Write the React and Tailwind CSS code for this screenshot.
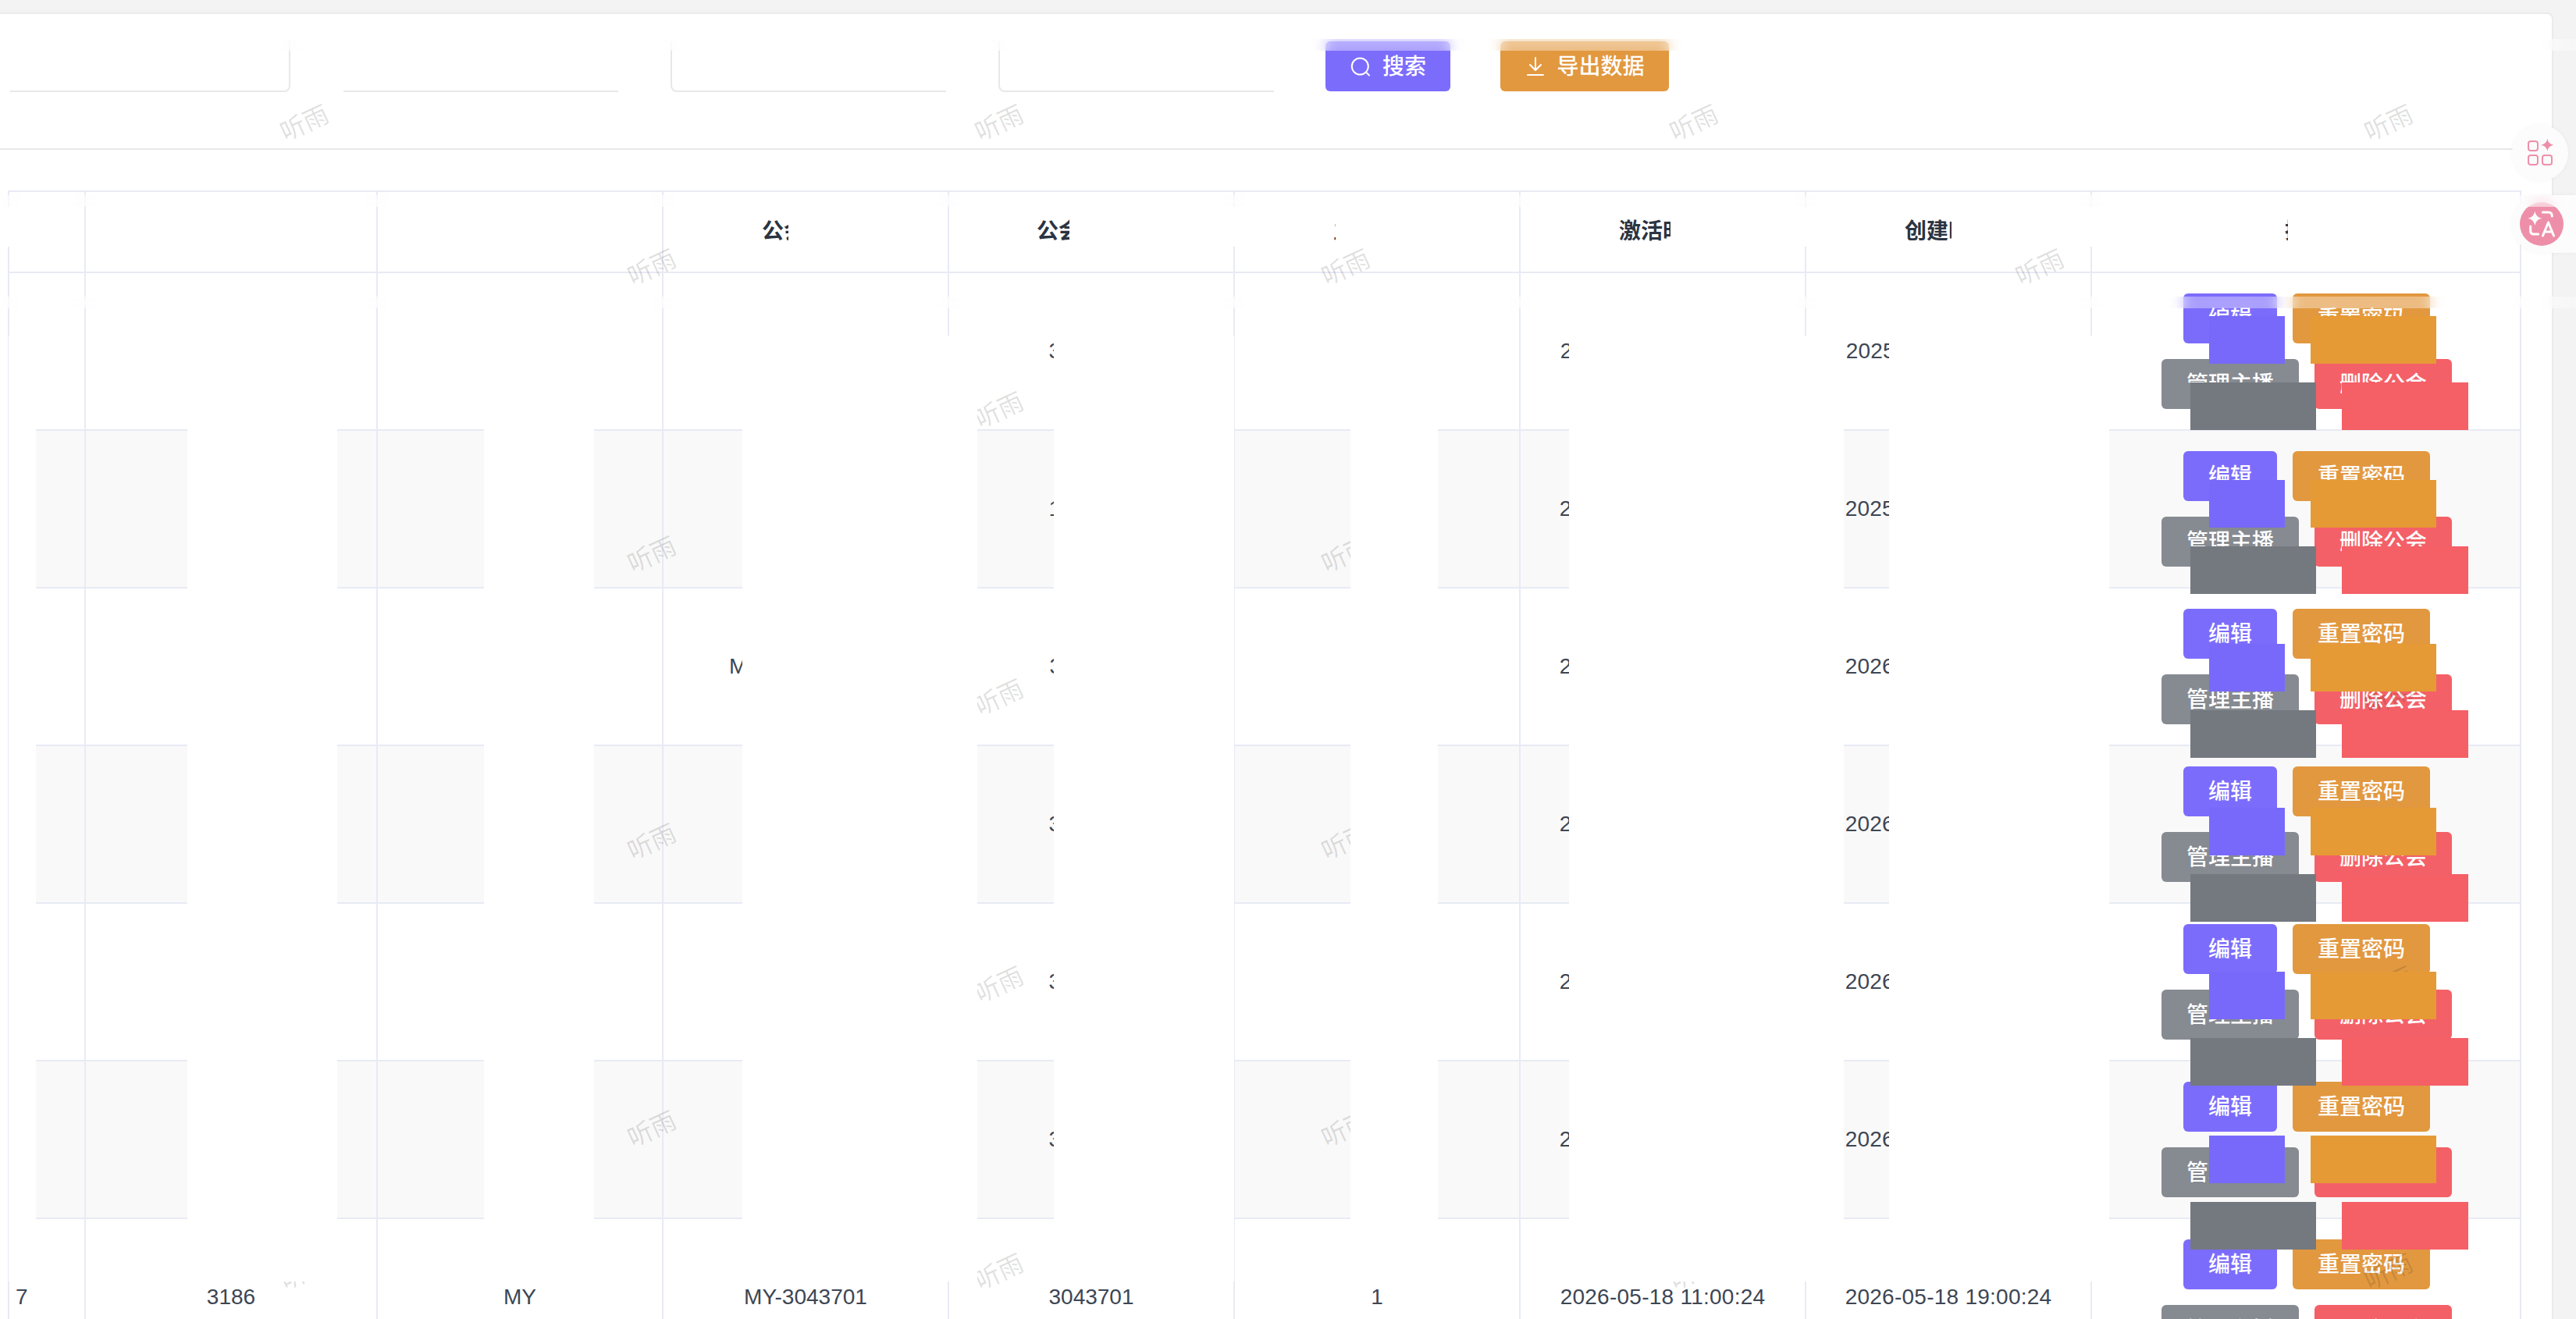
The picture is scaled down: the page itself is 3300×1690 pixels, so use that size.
import React from 'react';

const tableCols = 'grid grid-cols-[98px_374px_366px_366px_366px_366px_366px_366px_552px]';

const headers = ['序号', '公会ID', '地区', '公会账号', '公会邀请码', '主播数量', '激活时间', '创建时间'];

const rows = [
  ['1', '3201', 'MY', 'MY-3012201', '3012201', '2', '2025-11-20 10:12:08', '2025-11-20 18:12:08'],
  ['2', '3198', 'MY', 'MY-1028835', '1028835', '3', '2025-12-02 09:40:51', '2025-12-02 17:40:51'],
  ['3', '3195', 'MY', 'MY-3040112-08', '3040112', '1', '2026-01-14 13:22:37', '2026-01-14 21:22:37'],
  ['4', '3192', 'MY', 'MY-3041290', '3041290', '1', '2026-02-27 15:05:12', '2026-02-27 23:05:12'],
  ['5', '3190', 'MY', 'MY-3042076', '3042076', '2', '2026-03-19 08:31:44', '2026-03-19 16:31:44'],
  ['6', '3188', 'MY', 'MY-3042918', '3042918', '1', '2026-04-25 12:16:03', '2026-04-25 20:16:03'],
  ['7', '3186', 'MY', 'MY-3043701', '3043701', '1', '2026-05-18 11:00:24', '2026-05-18 19:00:24'],
];

// watermark grid repeats every 889 x 368, odd rows are shifted half a step
const marks = [];
for (let i = 0; i < 5; i++) {
  for (let j = 0; j < 4; j++) marks.push({ x: 390 + j * 890, y: 158 + i * 368 });
}
for (let i = 0; i < 4; i++) {
  for (let j = 0; j < 3; j++) marks.push({ x: 835 + j * 889, y: 343 + i * 368 });
}

function SearchIcon() {
  return (
    <svg width="28" height="28" viewBox="0 0 28 28" fill="none" stroke="white" strokeWidth="2" strokeLinecap="round">
      <circle cx="13.3" cy="14" r="10.5" />
      <path d="M21.5 22 L25 25.5" />
    </svg>
  );
}

function DownloadIcon() {
  return (
    <svg width="28" height="28" viewBox="0 0 28 28" fill="none" stroke="white" strokeWidth="2" strokeLinecap="round" strokeLinejoin="round">
      <path d="M14 3 V19 M7 12 L14 19 L21 12" />
      <path d="M4 25 H24" />
    </svg>
  );
}

function GridSparkIcon() {
  return (
    <svg width="36" height="36" viewBox="0 0 36 36" fill="none" stroke="#ee8fa9" strokeWidth="2" className="overflow-visible">
      <rect x="3" y="3" width="12" height="12" rx="3" />
      <rect x="3" y="21" width="12" height="12" rx="3" />
      <rect x="21" y="21" width="12" height="12" rx="3" />
      <path d="M27.3 -0.3 Q28.5 6.5 35.3 7.7 Q28.5 8.9 27.3 15.7 Q26.1 8.9 19.3 7.7 Q26.1 6.5 27.3 -0.3 Z" fill="#ee8fa9" stroke="none" />
    </svg>
  );
}

function TranslateIcon() {
  return (
    <svg width="56" height="56" viewBox="0 0 56 56" fill="none" stroke="white" strokeWidth="3" strokeLinecap="round" strokeLinejoin="round">
      <path d="M19.3 11.7 Q20.6 19.4 28.3 20.7 Q20.6 22 19.3 29.7 Q18 22 10.3 20.7 Q18 19.4 19.3 11.7 Z" fill="white" stroke="none" />
      <path d="M29.3 13 H37 Q41.3 13 41.3 18" />
      <path d="M13.7 31 V37 Q13.7 41 18 41 H23.7" />
      <path d="M29.5 43 L36.5 26 L43.5 43 M31.5 38 H41.5" />
    </svg>
  );
}

function ActionButton({ className, children }) {
  return (
    <button className={`h-[64px] pt-[2px] rounded-[6px] text-white text-[28px] font-medium flex items-center justify-center ${className}`}>
      {children}
    </button>
  );
}

function Actions() {
  return (
    <div className="flex flex-col items-center gap-[20px]">
      <div className="flex gap-[20px]">
        <ActionButton className="w-[120px] bg-[#7c6cfc]">编辑</ActionButton>
        <ActionButton className="w-[176px] bg-[#e2983f]">重置密码</ActionButton>
      </div>
      <div className="flex gap-[20px]">
        <ActionButton className="w-[176px] bg-[#868a91]">管理主播</ActionButton>
        <ActionButton className="w-[176px] bg-[#f46067]">删除公会</ActionButton>
      </div>
    </div>
  );
}

function FilterBar() {
  return (
    <div className="flex mt-[35px] pl-[13px]">
      <div className="w-[359px] h-[65px] border-r-2 border-b-2 border-[#e8e8ea] rounded-br-[8px]" />
      <div className="w-[352px] h-[65px] ml-[68px] border-b-2 border-[#e8e8ea]" />
      <div className="w-[353px] h-[65px] ml-[67px] border-l-2 border-b-2 border-[#e8e8ea] rounded-bl-[8px]" />
      <div className="w-[353px] h-[65px] ml-[67px] border-l-2 border-b-2 border-[#e8e8ea] rounded-bl-[8px]" />
      <button className="w-[160px] h-[64px] ml-[66px] rounded-[6px] bg-[#7c6cfc] text-white text-[28px] font-medium flex items-center justify-center gap-[14px]">
        <SearchIcon />
        <span className="pt-[2px]">搜索</span>
      </button>
      <button className="w-[216px] h-[64px] ml-[64px] rounded-[6px] bg-[#e2983f] text-white text-[28px] font-medium flex items-center justify-center gap-[13px]">
        <DownloadIcon />
        <span className="pt-[2px]">导出数据</span>
      </button>
    </div>
  );
}

function Table() {
  return (
    <div className="ml-[10px] mt-[52px] w-[3220px] border-t-2 border-r-2 border-[#e8eaf5]">
      <div className={`${tableCols} h-[104px] border-b-2 border-[#e8eaf5] text-[28px] font-semibold text-[#2b3442]`}>
        {headers.map(h => (
          <div key={h} className="border-l-2 border-[#e8eaf5] flex items-center justify-center">{h}</div>
        ))}
        <div className="border-l-2 border-[#e8eaf5] flex items-center justify-center">操作</div>
      </div>
      {rows.map((row, i) => (
        <div key={row[0]} className={`${tableCols} h-[202px] border-b-2 border-[#e8eaf5] text-[28px] text-[#3d4654] ${i % 2 === 1 ? 'bg-[#f9f9f9]' : 'bg-white'}`}>
          {row.map((val, k) => (
            <div key={k} className={`border-l-2 border-[#e8eaf5] flex items-center whitespace-nowrap ${k === 0 ? 'pl-[8px]' : 'justify-center'} ${k >= 6 ? 'tracking-[0.25px]' : ''}`}>{val}</div>
          ))}
          <div className="border-l-2 border-[#e8eaf5] flex items-center justify-center">
            <Actions />
          </div>
        </div>
      ))}
    </div>
  );
}

// white cover-ups: in these strips every odd cell is a blank patch, even cells let the table show
function CoverStrip({ className, count }) {
  return (
    <div className={`absolute grid ${className}`}>
      {Array.from({ length: count }).map((_, i) => (
        <div key={i} className={i % 2 === 0 ? 'bg-white' : ''} />
      ))}
    </div>
  );
}

export default function App() {
  return (
    <div className="relative w-[3300px] h-[1690px] overflow-hidden bg-[#f3f3f3] pt-[16px] pr-[29px] font-['Liberation_Sans','Noto_Sans_CJK_SC',sans-serif]">
      <div className="h-[1700px] bg-white border-t-2 border-r-2 border-[#ebebeb] rounded-tr-[8px]">
        <FilterBar />
        <div className="mt-[72px] h-[2px] bg-[#e8e8ea]" />
        <Table />
      </div>

      {/* watermark */}
      <div className="absolute inset-0 pointer-events-none">
        {marks.map(m => (
          <span
            key={`${m.x}-${m.y}`}
            className="absolute -translate-x-1/2 -translate-y-1/2 -rotate-[25deg] text-[32px] leading-none whitespace-nowrap text-black/12"
            style={{ left: m.x, top: m.y }}
          >
            听雨
          </span>
        ))}
      </div>

      <CoverStrip
        count={17}
        className="left-0 top-[265px] h-[51px] grid-cols-[108px_2px_372px_2px_364px_162px_204px_156px_230px_111px_235px_194px_190px_170px_200px_231px_297px]"
      />
      <CoverStrip
        count={15}
        className="left-[11px] top-[430px] h-[1212px] grid-cols-[35px_194px_192px_188px_141px_190px_301px_98px_231px_149px_112px_168px_352px_58px_282px]"
      />

      {/* action cover-ups, one set per 210px */}
      {[0, 1, 2, 3, 4, 5].map(i => (
        <React.Fragment key={i}>
          <div className="absolute left-[2830px] w-[97px] h-[61px] bg-[#7869fa]" style={{ top: 405 + i * 210 }} />
          <div className="absolute left-[2960px] w-[161px] h-[61px] bg-[#e69a35]" style={{ top: 405 + i * 210 }} />
          <div className="absolute left-[2806px] w-[161px] h-[61px] bg-[#747980]" style={{ top: 490 + i * 210 }} />
          <div className="absolute left-[3000px] w-[162px] h-[61px] bg-[#f55f66]" style={{ top: 490 + i * 210 }} />
        </React.Fragment>
      ))}

      {/* floating tools */}
      <div className="absolute left-[3218px] top-[160px] w-[72px] h-[72px] rounded-full bg-[#fcfcfc] shadow-[0_0_6px_rgba(0,0,0,0.04)] flex items-center justify-center">
        <GridSparkIcon />
      </div>
      <div className="absolute left-[3218px] top-[250px] w-[82px] h-[74px] rounded-l-full bg-[#fcfcfc] shadow-[0_0_6px_rgba(0,0,0,0.04)] flex items-center pl-[10px]">
        <div className="w-[56px] h-[56px] rounded-full bg-[#ee8fa9] shrink-0">
          <TranslateIcon />
        </div>
      </div>

      {/* blurred strips */}
      <div className="absolute left-0 top-[50px] w-full h-[15px] bg-white/35 backdrop-blur-[8px]" />
      <div className="absolute left-0 top-[250px] w-full h-[15px] bg-white/35 backdrop-blur-[8px]" />
      <div className="absolute left-0 top-[380px] w-full h-[15px] bg-white/35 backdrop-blur-[8px]" />
    </div>
  );
}
